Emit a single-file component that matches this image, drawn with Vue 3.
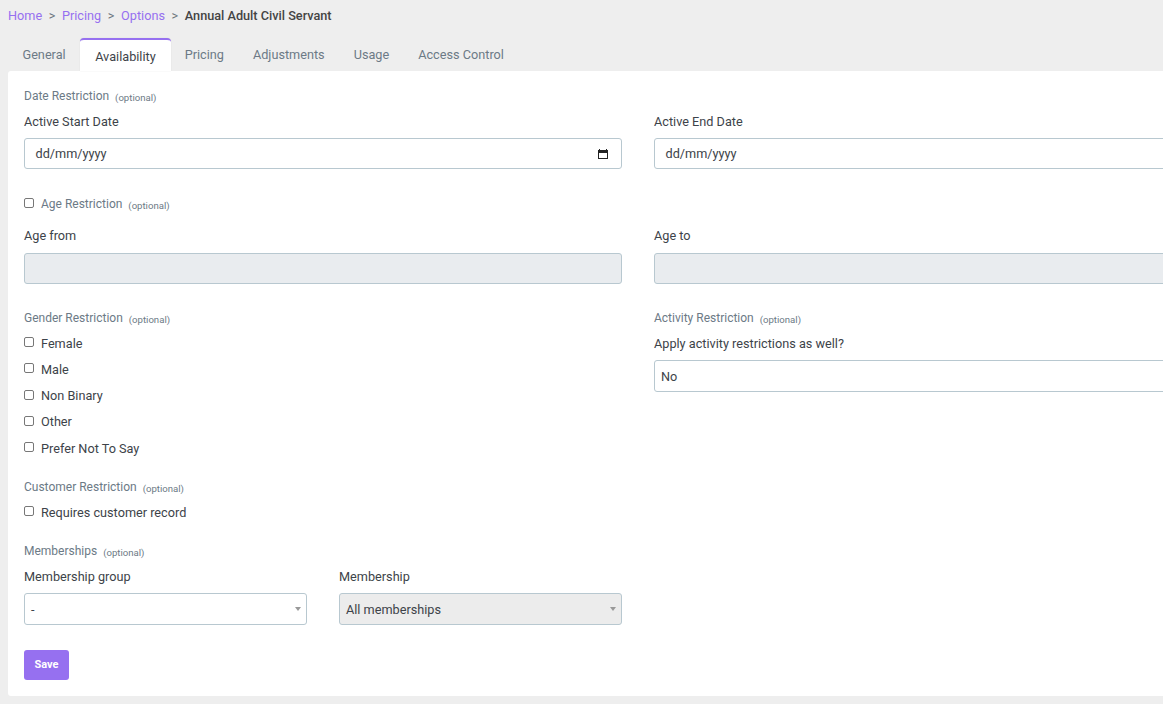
<template>
  <div class="page">
    <nav class="crumbs">
      <a>Home</a><span class="sep">&gt;</span>
      <a>Pricing</a><span class="sep">&gt;</span>
      <a>Options</a><span class="sep">&gt;</span>
      <strong>Annual Adult Civil Servant</strong>
    </nav>

    <ul class="tabs">
      <li v-for="tab in tabs" :key="tab" class="tab" :class="{ active: tab === 'Availability' }">{{ tab }}</li>
    </ul>

    <form class="panel" @submit.prevent>
      <div class="row">
        <div class="col">
          <p class="legend">Date Restriction <small>(optional)</small></p>
          <label class="label">Active Start Date</label>
          <div class="input date">
            <span>dd/mm/yyyy</span>
            <svg width="12" height="12" viewBox="0 0 12 12">
              <path d="M2 1h1v1h6V1h1v1h1v9H1V2h1zM2 5v5h8V5z" fill="#222" fill-rule="evenodd" />
            </svg>
          </div>
        </div>
        <div class="col">
          <p class="legend blank">&nbsp;</p>
          <label class="label">Active End Date</label>
          <div class="input date"><span>dd/mm/yyyy</span></div>
        </div>
      </div>

      <p class="legend check-legend">
        <input type="checkbox" class="check" />
        <span>Age Restriction <small>(optional)</small></span>
      </p>
      <div class="row age-row">
        <div class="col">
          <label class="label">Age from</label>
          <div class="input disabled"></div>
        </div>
        <div class="col">
          <label class="label">Age to</label>
          <div class="input disabled"></div>
        </div>
      </div>

      <div class="row">
        <div class="col">
          <p class="legend">Gender Restriction <small>(optional)</small></p>
          <label v-for="g in genders" :key="g" class="check-row">
            <input type="checkbox" class="check" />{{ g }}
          </label>

          <p class="legend section">Customer Restriction <small>(optional)</small></p>
          <label class="check-row"><input type="checkbox" class="check" />Requires customer record</label>

          <p class="legend section">Memberships <small>(optional)</small></p>
          <div class="row member-row">
            <div class="col">
              <label class="label">Membership group</label>
              <div class="input select">
                <span>-</span><i class="caret"></i>
              </div>
            </div>
            <div class="col">
              <label class="label">Membership</label>
              <div class="input select grey">
                <span>All memberships</span><i class="caret"></i>
              </div>
            </div>
          </div>
        </div>
        <div class="col">
          <p class="legend">Activity Restriction <small>(optional)</small></p>
          <label class="label">Apply activity restrictions as well?</label>
          <div class="input select"><span>No</span></div>
        </div>
      </div>

      <button type="submit" class="save">Save</button>
    </form>
  </div>
</template>

<script setup>
const tabs = ['General', 'Availability', 'Pricing', 'Adjustments', 'Usage', 'Access Control']
const genders = ['Female', 'Male', 'Non Binary', 'Other', 'Prefer Not To Say']
</script>

<style>
html, body {
  margin: 0;
  background: #eeeeee;
  overflow: hidden;
}
</style>

<style scoped>
.page {
  width: 1163px;
  height: 704px;
  overflow: hidden;
  box-sizing: border-box;
  padding: 0 0 0 8px;
  font-family: Roboto, "Liberation Sans", sans-serif;
  font-size: 12.7px;
  color: #3d4349;
}
.crumbs {
  height: 31px;
  display: flex;
  align-items: center;
  font-size: 12.7px;
}
.crumbs a {
  color: #9670f0;
}
.crumbs .sep {
  margin: 0 6.6px;
  color: #6c757d;
}
.crumbs strong {
  font-weight: 500;
  color: #444;
}
.tabs {
  display: flex;
  list-style: none;
  margin: 7px 0 0;
  padding: 0;
  height: 33px;
}
.tab {
  padding: 9px 14.5px 0;
  color: #6c7a86;
  box-sizing: border-box;
}
.tab.active {
  background: #fff;
  color: #3d4349;
  border-top: 2px solid #9670f0;
  border-radius: 4px 4px 0 0;
  padding: 9px 15px 0;
  margin-right: -0.5px;
  box-shadow: 0 0 1px #ccc;
}
.panel {
  width: 1260px;
  height: 625px;
  box-sizing: border-box;
  background: #fff;
  padding: 16px;
  border-radius: 3px 0 0 3px;
}
.row {
  display: flex;
  gap: 32px;
}
.col {
  flex: 0 0 598px;
}
.member-row .col {
  flex: 0 0 283px;
}
.legend {
  margin: 0;
  height: 18px;
  line-height: 18px;
  font-size: 12px;
  color: #6c7a86;
}
.legend small {
  font-size: 9.6px;
  line-height: 1;
  margin-left: 3px;
  vertical-align: -1px;
}
.label {
  display: block;
  height: 18px;
  line-height: 18px;
  margin: 8px 0 7px;
}
.input {
  height: 31px;
  box-sizing: border-box;
  border: 1px solid #b8c8d0;
  border-radius: 3px;
  display: flex;
  align-items: center;
  justify-content: space-between;
  background: #fff;
}
.date {
  padding: 0 12px 0 10.5px;
}
.disabled {
  background: #e9ecef;
}
.select {
  height: 32px;
  padding: 0 5px 0 6px;
}
.grey {
  background: #ececec;
}
.caret {
  border-left: 3px solid transparent;
  border-right: 3px solid transparent;
  border-top: 4px solid #999;
}
.check-legend {
  display: flex;
  align-items: center;
  margin-top: 26px;
}
.check {
  appearance: none;
  width: 10px;
  height: 10px;
  margin: 0 7px 2px 0;
  box-sizing: border-box;
  border: 1px solid #777;
  border-radius: 2px;
  background: #fff;
}
.age-row {
  margin-top: 6px;
  margin-bottom: 25px;
}
.age-row .label {
  margin-bottom: 8px;
}
.check-row {
  display: flex;
  align-items: center;
  height: 18px;
  margin-top: 8.25px;
}
.legend + .check-row {
  margin-top: 7px;
}
.section {
  margin-top: 21px;
}
.save {
  display: block;
  margin-top: 25px;
  width: 45px;
  height: 30px;
  border: none;
  border-radius: 3px;
  background: #9670f0;
  color: #fff;
  font-family: inherit;
  font-size: 11px;
  font-weight: 700;
  padding: 0 0 2px;
}
</style>
